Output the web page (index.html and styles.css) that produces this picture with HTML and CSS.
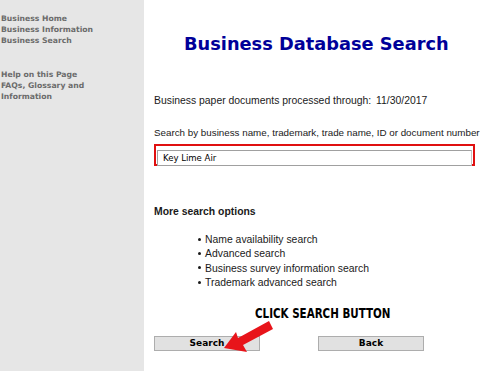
FILE: index.html
```html
<!DOCTYPE html>
<html lang="en">
<head>
    <meta charset="UTF-8">
    <title>Business Database Search</title>
    <link rel="stylesheet" href="styles.css">
</head>
<body>
    <div class="page">
        <div class="sidebar">
            <ul class="nav">
                <li><a href="#">Business Home</a></li>
                <li><a href="#">Business Information</a></li>
                <li><a href="#">Business Search</a></li>
            </ul>
            <ul class="nav help">
                <li><a href="#">Help on this Page</a></li>
                <li><a href="#">FAQs, Glossary and Information</a></li>
            </ul>
        </div>

        <div class="main">
            <h1>Business Database Search</h1>

            <p class="processed">Business paper documents processed through: <span class="date">11/30/2017</span></p>

            <label class="search-label" for="search">Search by business name, trademark, trade name, ID or document number</label>
            <div class="highlight">
                <input type="text" id="search" value="Key Lime Air">
            </div>

            <h2>More search options</h2>
            <ul class="options">
                <li>Name availability search</li>
                <li>Advanced search</li>
                <li>Business survey information search</li>
                <li>Trademark advanced search</li>
            </ul>

            <div class="callout"><span>CLICK SEARCH BUTTON</span></div>

            <div class="buttons">
                <button class="btn">Search</button>
                <button class="btn">Back</button>
                <svg class="arrow" width="52" height="34" viewBox="0 0 52 34">
                    <polygon points="0,28 12,12 14,18 45,1 49,9 19,25 23,32" fill="#e8141a"/>
                </svg>
            </div>
        </div>
    </div>
</body>
</html>
```

FILE: styles.css
```css
body {
    margin: 0;
    font-family: "Liberation Sans", Arial, sans-serif;
    background: #ffffff;
}

.page {
    display: flex;
    min-height: 371px;
}

.sidebar {
    width: 144px;
    flex-shrink: 0;
    background: #e6e6e6;
    padding-top: 14px;
    box-sizing: border-box;
}

.nav {
    list-style: none;
    margin: 0;
    padding: 0 0 0 1px;
}

.nav li {
    font-family: "DejaVu Sans", Verdana, sans-serif;
    font-size: 7.7px;
    font-weight: bold;
    line-height: 10.8px;
}

.nav a {
    color: #6b6b6b;
    text-decoration: none;
}

.help {
    margin-top: 24px;
    width: 100px;
}

.main {
    flex: 1;
    padding-left: 10px;
    color: #1a1a1a;
}

h1 {
    font-family: "DejaVu Sans", Verdana, sans-serif;
    font-size: 17.8px;
    color: #000099;
    margin: 33px 0 0 30px;
}

.processed {
    font-size: 10.4px;
    margin: 41px 0 0 0;
}

.date {
    margin-left: 2px;
}

.search-label {
    display: block;
    font-size: 9.8px;
    margin-top: 21px;
    white-space: nowrap;
}

.highlight {
    width: 321px;
    height: 22px;
    margin-top: 6px;
    border: 2px solid #e01010;
    box-sizing: border-box;
    padding: 1px;
}

.highlight input {
    width: 100%;
    height: 100%;
    box-sizing: border-box;
    border: 1px solid #a0a0a0;
    border-right-color: #c8c8c8;
    padding: 0 0 0 5px;
    font-family: "DejaVu Sans Condensed", "DejaVu Sans", sans-serif;
    font-size: 9.5px;
    color: #000;
    outline: none;
}

h2 {
    font-size: 10.4px;
    margin: 40px 0 0 0;
}

.options {
    list-style: none;
    font-size: 10.4px;
    margin: 16px 0 0 0;
    padding-left: 51px;
    line-height: 14.3px;
}

.options li::before {
    content: "";
    display: inline-block;
    width: 3px;
    height: 3px;
    border-radius: 50%;
    background: #1a1a1a;
    margin: 0 4px 2px -7px;
    vertical-align: middle;
}

.callout {
    margin: 14px 0 0 101px;
}

.callout span {
    display: inline-block;
    font-family: "DejaVu Sans Condensed", "DejaVu Sans", sans-serif;
    font-weight: bold;
    font-size: 14px;
    color: #000;
    transform: scaleX(0.82);
    transform-origin: left center;
}

.buttons {
    position: relative;
    display: flex;
    gap: 58px;
    margin-top: 14px;
}

.btn {
    width: 106px;
    height: 15px;
    padding: 0;
    background: #e1e1e1;
    border: 1px solid #adadad;
    font-family: "DejaVu Sans", Verdana, sans-serif;
    font-size: 9px;
    font-weight: bold;
    color: #000;
    line-height: 13px;
}

.arrow {
    position: absolute;
    left: 70px;
    top: -16px;
}
```
